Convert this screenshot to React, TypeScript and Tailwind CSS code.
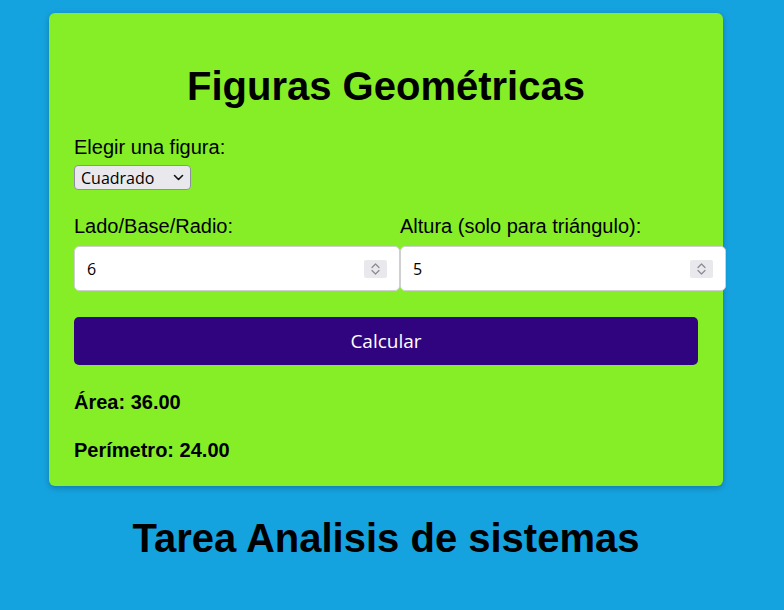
import React, { useState } from "react";

// small up/down spinner box drawn over the number inputs
const Spinner: React.FC = () => (
  <div className="pointer-events-none absolute right-[13px] top-1/2 -translate-y-1/2 w-[23px] h-[18px] bg-[#e9e9ed] rounded-[2px] flex items-center justify-center">
    <svg width="11" height="14" viewBox="0 0 11 14" fill="none" stroke="#8a8a8f" strokeWidth="1.2" strokeLinecap="round" strokeLinejoin="round">
      <path d="M2 5.5 L5.5 2 L9 5.5" />
      <path d="M2 8.5 L5.5 12 L9 8.5" />
    </svg>
  </div>
);

const NumberField: React.FC<{ value: string; onChange: (v: string) => void }> = ({ value, onChange }) => (
  <div className="relative w-[326px] shrink-0">
    <input
      type="number"
      value={value}
      onChange={(e) => onChange(e.target.value)}
      className="w-full h-[45px] bg-white border border-[#cfcfcf] rounded-[5px] pl-[12px] pr-[40px] text-[16px] text-black outline-none [appearance:textfield] [&::-webkit-inner-spin-button]:appearance-none [&::-webkit-outer-spin-button]:appearance-none"
      style={{ fontFamily: '"Open Sans", "DejaVu Sans", sans-serif' }}
    />
    <Spinner />
  </div>
);

export default function App() {
  const [figura, setFigura] = useState("cuadrado");
  const [lado, setLado] = useState("6");
  const [altura, setAltura] = useState("5");

  return (
    <div className="min-h-[610px] bg-[#15a3e0] font-['Liberation_Sans',Arial,sans-serif] text-black">
      <div className="w-[772px] flex flex-col items-center pt-[13px]">
        {/* Card */}
        <div className="w-[674px] bg-[#86ee27] rounded-[6px] shadow-[0_2px_6px_rgba(0,0,0,0.25)] px-[25px] pt-[50px] pb-[24px]">
          <h1 className="text-[40px] leading-[46px] font-bold text-center">Figuras Geométricas</h1>

          <div className="mt-[27px]">
            <label className="block text-[20px] leading-[23px]">Elegir una figura:</label>
            <div className="relative mt-[6px] w-[117px] h-[25px]">
              <select
                value={figura}
                onChange={(e) => setFigura(e.target.value)}
                className="appearance-none w-full h-full bg-[#e9e9ed] border border-[#8f8f9d] rounded-[4px] pl-[6px] text-[16px] text-black outline-none"
                style={{ fontFamily: '"Open Sans", "DejaVu Sans", sans-serif' }}
              >
                <option value="cuadrado">Cuadrado</option>
                <option value="circulo">Círculo</option>
                <option value="triangulo">Triángulo</option>
              </select>
              <svg className="pointer-events-none absolute right-[7px] top-[9px]" width="11" height="7" viewBox="0 0 11 7" fill="none" stroke="#111" strokeWidth="1.6" strokeLinecap="round" strokeLinejoin="round">
                <path d="M1.5 1.5 L5.5 5.5 L9.5 1.5" />
              </svg>
            </div>
          </div>

          <div className="mt-[25px] flex">
            <div className="w-[326px] shrink-0">
              <label className="block text-[20px] leading-[23px]">Lado/Base/Radio:</label>
              <div className="mt-[8px]">
                <NumberField value={lado} onChange={setLado} />
              </div>
            </div>
            <div className="w-[326px] shrink-0">
              <label className="block text-[20px] leading-[23px] pl-[-1px]">Altura (solo para triángulo):</label>
              <div className="mt-[8px]">
                <NumberField value={altura} onChange={setAltura} />
              </div>
            </div>
          </div>

          <button
            className="mt-[26px] w-full h-[48px] bg-[#31047f] rounded-[5px] text-white text-[19px]"
            style={{ fontFamily: '"Open Sans", "Noto Sans", sans-serif' }}
          >
            Calcular
          </button>

          <p className="mt-[26px] text-[20px] leading-[23px] font-bold">Área: 36.00</p>
          <p className="mt-[25px] text-[20px] leading-[23px] font-bold">Perímetro: 24.00</p>
        </div>

        <h2 className="mt-[29px] text-[40px] leading-[46px] font-bold text-center">Tarea Analisis de sistemas</h2>
      </div>
    </div>
  );
}
